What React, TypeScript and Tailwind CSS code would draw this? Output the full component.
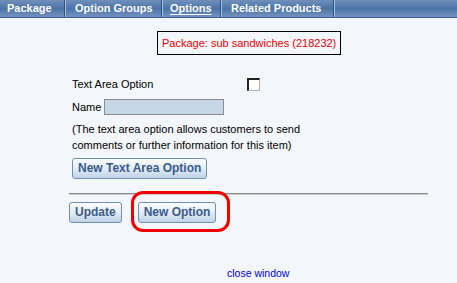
import { ReactNode } from "react";

const tabs = [
    { label: "Package", w: "w-[64px] pl-[7px]", active: false },
    { label: "Option Groups", w: "w-[95px] pl-[9px]", active: false },
    { label: "Options", w: "w-[57px] pl-[7px]", active: true },
    { label: "Related Products", w: "w-[111px] pl-[9px]", active: false },
];

function Btn({ children }: { children: ReactNode }) {
    return (
        <button className="h-[21px] px-[5px] rounded-[3px] border border-[#6f8fb6] bg-gradient-to-b from-[#fbfdff] via-[#e3ecf6] to-[#bfd2e7] text-[12px] font-bold leading-none text-[#3b5b88]">
            {children}
        </button>
    );
}

export default function App() {
    return (
        <div className="min-h-[283px] w-[457px] bg-[#f3f7fb] font-['Liberation_Sans',Arial,sans-serif]">
            <nav className="flex h-[18px] items-stretch border-b border-[#3c5e8c] bg-gradient-to-b from-[#7190bb] via-[#4a74a7] to-[#7393c0]">
                {tabs.map((t) => (
                    <div key={t.label} className="flex items-stretch">
                        <span
                            className={`flex items-center whitespace-nowrap ${t.w} text-[11px] font-bold text-white ${t.active ? "underline underline-offset-[2px]" : ""}`}
                        >
                            {t.label}
                        </span>
                        <span className="w-[2px] border-l border-[#2f5283] bg-[#a8c0de]" />
                    </div>
                ))}
            </nav>

            <div className="ml-[157px] mt-[13px] flex h-[24px] w-[184px] items-center border border-black pl-[4px] text-[11px] text-[#ee0000]">
                Package: sub sandwiches (218232)
            </div>

            <div className="ml-[69px] w-[359px] text-[11px] text-black">
                <div className="mt-[23px] flex h-[12px] items-center pl-[3px]">
                    <span className="w-[175px]">Text Area Option</span>
                    <span className="h-[13px] w-[13px] border-l-2 border-t-2 border-[#222] border-r border-b border-r-[#b0b0b0] border-b-[#b0b0b0] bg-white" />
                </div>
                <div className="mt-[9px] flex items-center pl-[3px]">
                    <span className="w-[32px]">Name</span>
                    <input className="h-[16px] w-[120px] border border-[#8c8c8c] bg-[#c6d8e7]" />
                </div>
                <p className="mt-[5px] pl-[3px] leading-[16px]">
                    (The text area option allows customers to send
                    <br />
                    comments or further information for this item)
                </p>
                <div className="mt-[5px] pl-[3px]">
                    <Btn>New Text Area Option</Btn>
                </div>
                <div className="mt-[14px] h-[2px] border-t border-[#8a8a8a] bg-[#c9c9c9]" />
                <div className="mt-[7px] flex gap-[16px]">
                    <Btn>Update</Btn>
                    <div className="relative">
                        <Btn>New Option</Btn>
                        <span className="absolute -left-[7px] -top-[11px] -right-[14px] -bottom-[9px] rounded-[12px] border-[3px] border-[#f00000]" />
                    </div>
                </div>
            </div>

            <div className="ml-[227px] mt-[44px] text-[10.5px] leading-[12px] text-[#0000ee]">
                close window
            </div>
        </div>
    );
}
